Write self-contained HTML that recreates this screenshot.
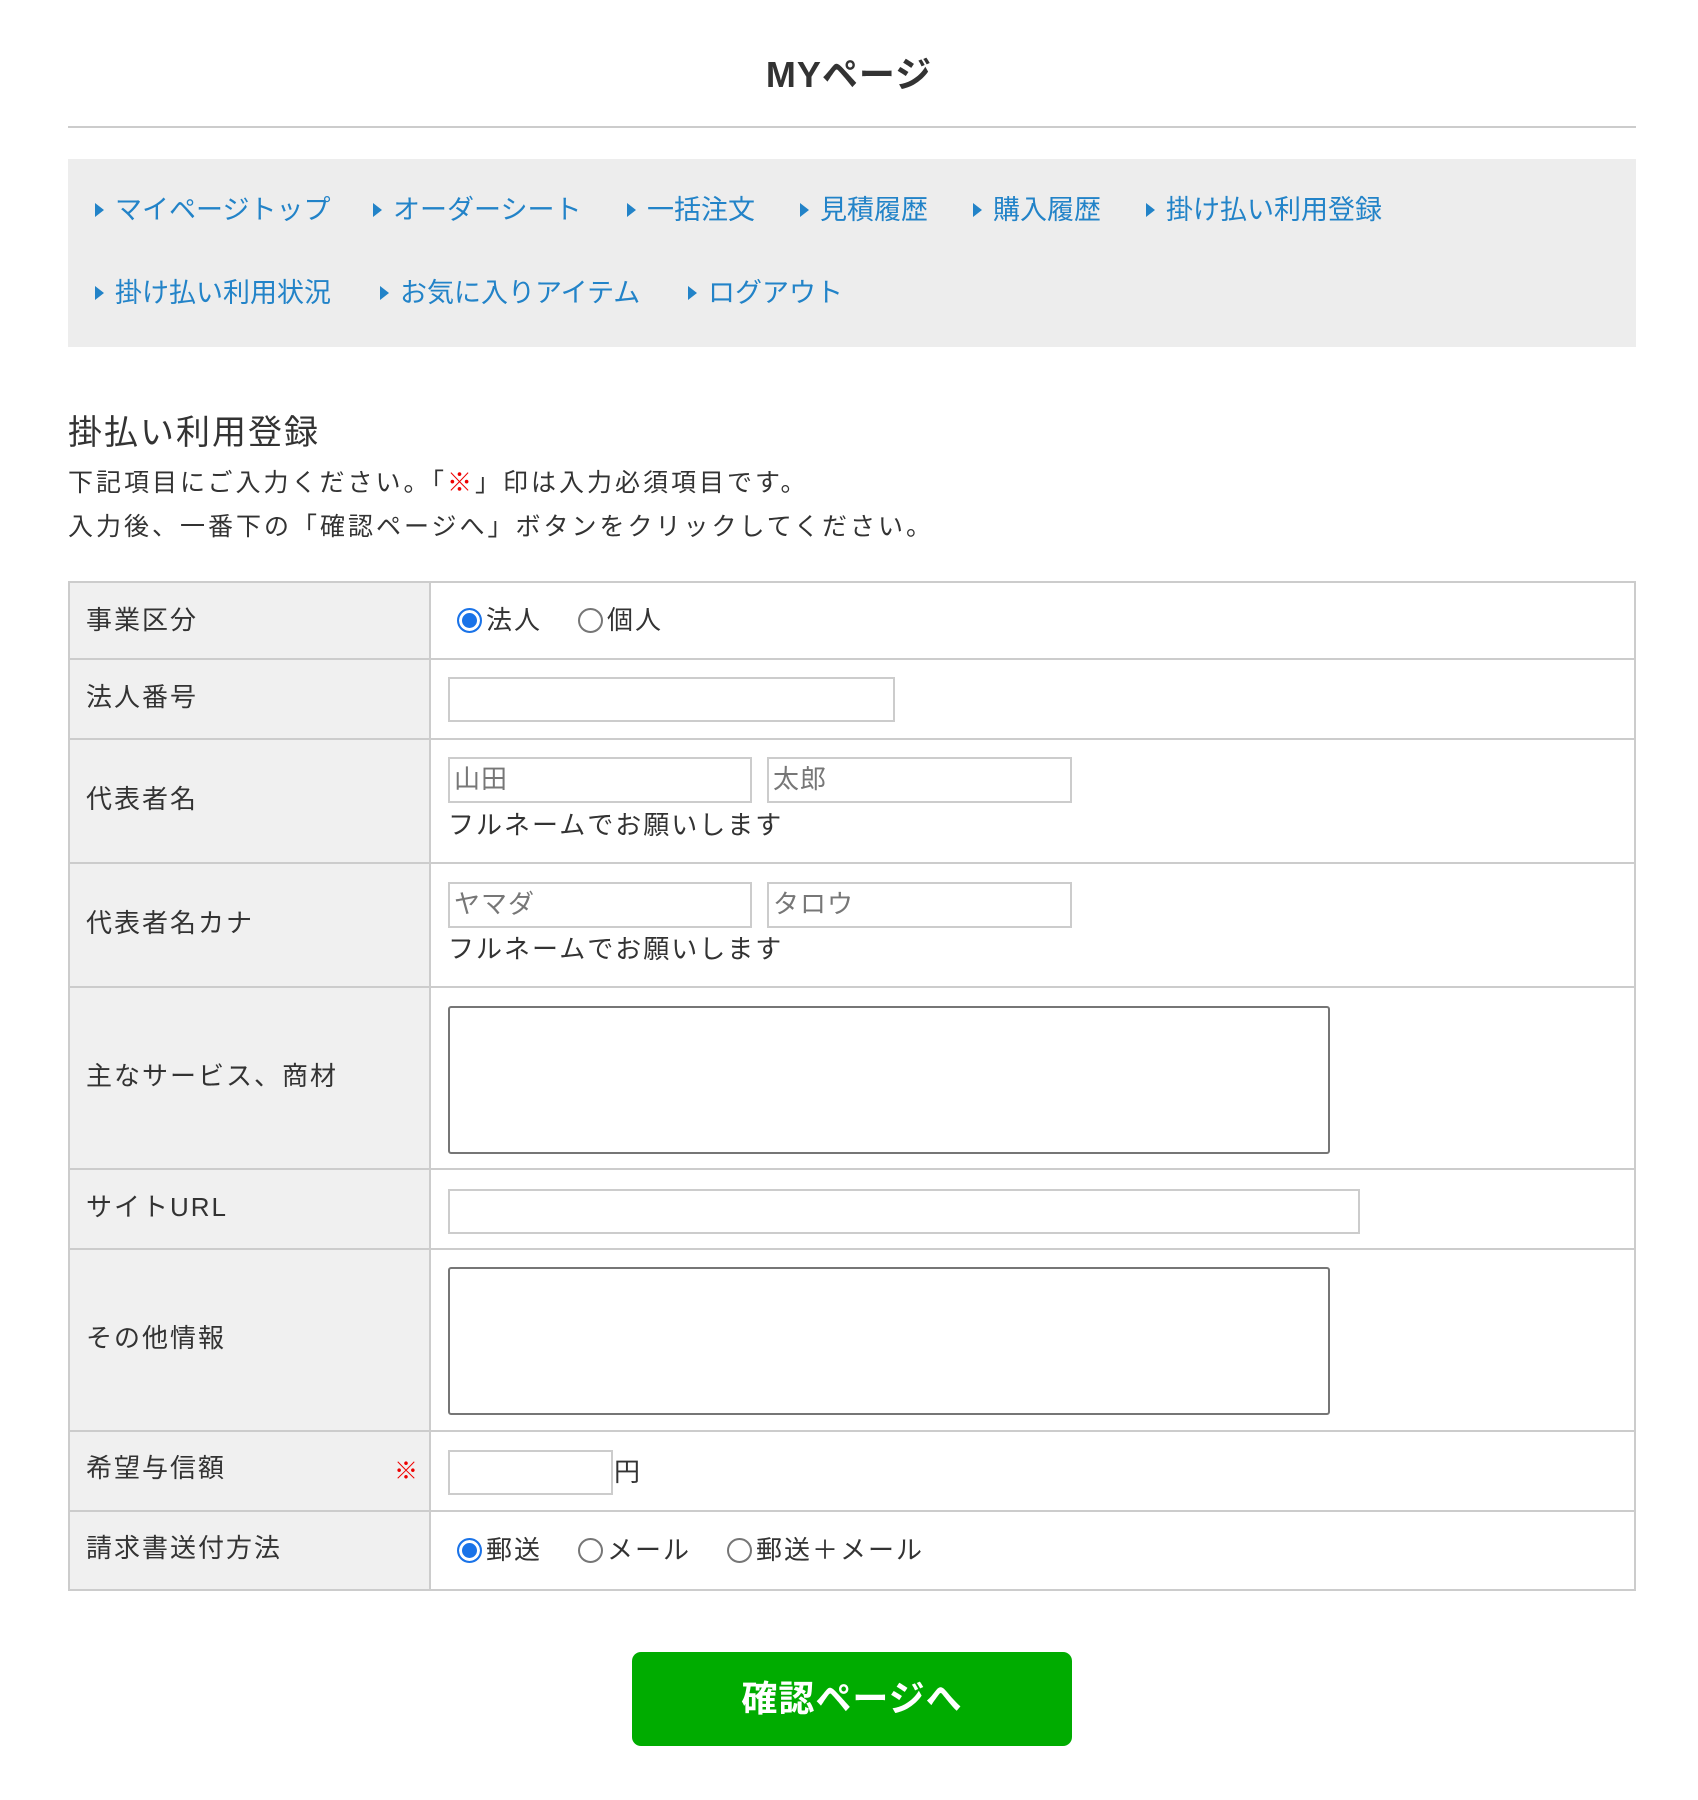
<!DOCTYPE html>
<html><head><meta charset="utf-8"><style>
*{margin:0;padding:0;box-sizing:border-box}
body{width:1698px;height:1800px;background:#fff;font-family:"Liberation Sans","Noto Sans CJK JP",sans-serif;color:#333;position:relative;overflow:hidden}
.a{position:absolute;white-space:nowrap}
h1{position:absolute;left:0;width:1698px;top:52px;text-align:center;font-size:36px;font-weight:bold;color:#333;line-height:46px;letter-spacing:1px}
.hr{position:absolute;left:68px;width:1568px;top:126px;height:2px;background:#ccc}
.nav{position:absolute;left:68px;top:159px;width:1568px;height:188px;background:#ededed}
.nl{position:absolute;font-size:27px;color:#2283c8;line-height:36px;white-space:nowrap}
.nl:before{content:"";display:inline-block;border-left:9px solid #2283c8;border-top:7px solid transparent;border-bottom:7px solid transparent;margin-right:11px;vertical-align:2px}
.tbl{position:absolute;left:68px;top:581px;width:1568px;height:1010px;border:2px solid #ccc}
.lab{position:absolute;left:0;width:361px;background:#f0f0f0;border-right:2px solid #ccc}
.line{position:absolute;left:0;width:1564px;height:2px;background:#ccc}
.t{font-size:26px;line-height:34px;color:#333;letter-spacing:2px}
.inp{position:absolute;border:2px solid #ccc;background:#fff;font-size:26px;color:#777;padding-left:4px;line-height:40px;letter-spacing:1px}
.ta{position:absolute;border:2px solid #767676;border-radius:3px;background:#fff}
.r{display:inline-block;width:25px;height:25px;border-radius:50%;border:2px solid #767676;vertical-align:-4px;margin-right:4px;background:#fff}
.r.on{border:2px solid #1a73e8;box-shadow:inset 0 0 0 3px #fff;background:#1a73e8}
.g{display:inline-block;width:36px}
</style></head><body>
<h1>MYページ</h1>
<div class="hr"></div>
<div class="nav"></div>
<div class="nl" style="left:95px;top:192px">マイページトップ</div>
<div class="nl" style="left:373px;top:192px">オーダーシート</div>
<div class="nl" style="left:627px;top:192px">一括注文</div>
<div class="nl" style="left:800px;top:192px">見積履歴</div>
<div class="nl" style="left:973px;top:192px">購入履歴</div>
<div class="nl" style="left:1146px;top:192px">掛け払い利用登録</div>
<div class="nl" style="left:95px;top:275px">掛け払い利用状況</div>
<div class="nl" style="left:380px;top:275px">お気に入りアイテム</div>
<div class="nl" style="left:688px;top:275px">ログアウト</div>

<div class="a" style="left:68px;top:412px;font-size:34px;line-height:42px;color:#333;letter-spacing:2px">掛払い利用登録</div>
<div class="a t" style="left:68px;top:466px;font-size:25px;letter-spacing:3px">下記項目にご入力ください。「<span style="color:#e00;font-weight:bold">※</span>」印は入力必須項目です。</div>
<div class="a t" style="left:68px;top:510px;font-size:25px;letter-spacing:3px">入力後、一番下の「確認ページへ」ボタンをクリックしてください。</div>

<div class="tbl">
<div class="lab" style="top:0;height:1006px"></div>
<div class="line" style="top:75px"></div>
<div class="line" style="top:155px"></div>
<div class="line" style="top:279px"></div>
<div class="line" style="top:403px"></div>
<div class="line" style="top:585px"></div>
<div class="line" style="top:665px"></div>
<div class="line" style="top:847px"></div>
<div class="line" style="top:927px"></div>
</div>
<div class="a t" style="left:86px;top:603px">事業区分</div>
<div class="a t" style="left:86px;top:680px">法人番号</div>
<div class="a t" style="left:86px;top:782px">代表者名</div>
<div class="a t" style="left:86px;top:906px">代表者名カナ</div>
<div class="a t" style="left:86px;top:1059px">主なサービス、商材</div>
<div class="a t" style="left:86px;top:1190px">サイトURL</div>
<div class="a t" style="left:86px;top:1321px">その他情報</div>
<div class="a t" style="left:86px;top:1451px">希望与信額</div>
<div class="a" style="left:394px;top:1455px;color:#e00;font-size:24px;line-height:34px;font-weight:bold">※</div>
<div class="a t" style="left:86px;top:1531px">請求書送付方法</div>

<div class="a t" style="left:457px;top:603px"><span class="r on"></span>法人<span class="g"></span><span class="r"></span>個人</div>
<div class="inp" style="left:448px;top:677px;width:447px;height:45px"></div>
<div class="inp" style="left:448px;top:757px;width:304px;height:46px">山田</div>
<div class="inp" style="left:767px;top:757px;width:305px;height:46px">太郎</div>
<div class="a t" style="left:448px;top:808px">フルネームでお願いします</div>
<div class="inp" style="left:448px;top:882px;width:304px;height:46px">ヤマダ</div>
<div class="inp" style="left:767px;top:882px;width:305px;height:46px">タロウ</div>
<div class="a t" style="left:448px;top:932px">フルネームでお願いします</div>
<div class="ta" style="left:448px;top:1006px;width:882px;height:148px"></div>
<div class="inp" style="left:448px;top:1189px;width:912px;height:45px"></div>
<div class="ta" style="left:448px;top:1267px;width:882px;height:148px"></div>
<div class="inp" style="left:448px;top:1450px;width:165px;height:45px"></div>
<div class="a t" style="left:614px;top:1455px">円</div>
<div class="a t" style="left:457px;top:1533px"><span class="r on"></span>郵送<span class="g"></span><span class="r"></span>メール<span class="g"></span><span class="r"></span>郵送＋メール</div>

<div class="a" style="left:632px;top:1652px;width:440px;height:94px;background:#00ac00;border-radius:9px;color:#fff;font-size:36px;font-weight:bold;text-align:center;line-height:94px;letter-spacing:1px">確認ページへ</div>
</body></html>
